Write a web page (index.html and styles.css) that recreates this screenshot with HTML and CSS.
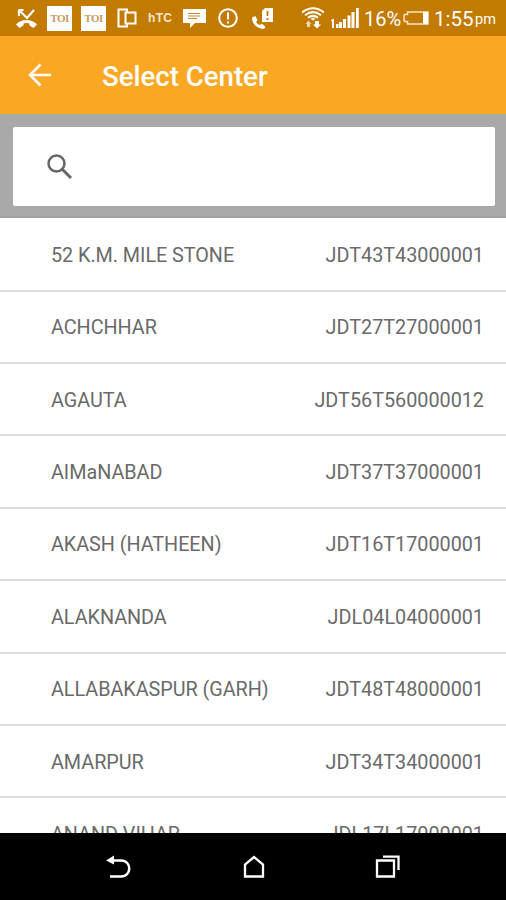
FILE: index.html
```html
<!DOCTYPE html>
<html lang="en">
<head>
<meta charset="utf-8">
<title>Select Center</title>
<link rel="stylesheet" href="styles.css">
</head>
<body>
<div class="screen">
  <header class="status">
    <svg class="missed" width="21" height="22" viewBox="0 0 21 22"><path d="M3 2v6M2.500 2h5M4 3l7 7 7-8" fill="none" stroke="#fff" stroke-width="2.200"/><path d="M0 16.500C5 10.500 16 10.500 21 16.500L17.500 20 13.500 17.500V15.500Q10.500 14.500 7.500 15.500V17.500L3.500 20Z" fill="#fff"/></svg>
    <span class="toi">TOI</span>
    <span class="toi">TOI</span>
    <svg class="devices" width="20" height="20" viewBox="0 0 20 20" fill="none" stroke="#fff" stroke-width="2"><path d="M10 4V1.500H1.500V18.500H10V16"/><path d="M8.500 4.500H18.500V15.500H8.500Z"/></svg>
    <span class="htc">hTC</span>
    <svg class="message" width="23" height="20" viewBox="0 0 23 20"><path d="M0 1H23V15H12L7 20V15H0Z" fill="#fff"/><path d="M5 5.500H17M5 8H17M5 10.500H14" stroke="#c98622"/></svg>
    <svg class="alert" width="20" height="20" viewBox="0 0 20 20"><circle cx="10" cy="10" r="8.800" fill="none" stroke="#fff" stroke-width="2"/><path d="M10 4.500V11.500M10 13.500V15.500" stroke="#fff" stroke-width="2"/></svg>
    <svg class="sim" width="21" height="21" viewBox="0 0 21 21"><path d="M13 0H21V14H10V3Z" fill="#fff"/><path d="M15.500 3V8M15.500 10V12" stroke="#c27a00" stroke-width="1.800"/><path d="M0 9.500L3.500 8 5.500 12.500 4 14Q5.500 16.500 8 17L10 15.500 13.500 19 12 21C5 21 0 16 0 9.500Z" fill="#fff"/></svg>
    <svg class="wifi" width="22" height="22" viewBox="0 0 22 22"><g fill="none" stroke="#fff" stroke-width="2"><path d="M0 5.500Q11-3 22 5.500"/><path d="M3 8.300Q11 2 19 8.300"/><path d="M6 10.800Q11 7 16 10.800"/></g><path d="M8.500 12L11 10.500 13.500 12 11 13.500Z" fill="#fff"/><path d="M6.500 13.500L9.500 17H8V20H5V17H3.500Z" fill="#efd7a9"/><path d="M15 21.500L11 17.500H13V14H17V17.500H19Z" fill="#fff"/></svg>
    <svg class="signal" width="28" height="21" viewBox="0 0 28 21" fill="#fff"><path d="M0 12L3 10.500V20H1V13H0ZM8 14h3v6H8zM12 11h3v9h-3zM16.500 7.500h3V20h-3zM20.500 4h3v16h-3zM25 0h2.800v20H25z"/><path d="M5 16h2.500v4H5z"/></svg>
    <span class="percent">16%</span>
    <svg class="battery" width="26" height="14" viewBox="0 0 26 14"><path d="M4.500 1H25V13H4.500V10.500H1.500L1 9V5L1.500 3.500H4.500Z" fill="none" stroke="#f8e5c5" stroke-width="1.500"/><path d="M20 1H25V13H20Z" fill="#fff"/></svg>
    <span class="time">1:55</span><span class="pm">pm</span>
  </header>
  <div class="bar">
    <svg width="24" height="24" viewBox="0 0 24 24" fill="none" stroke="#fff" stroke-width="2.600"><path d="M23 12H2M12.500 1.500L2 12 12.500 22.500"/></svg>
    <h1>Select Center</h1>
  </div>
  <div class="search">
    <div class="field">
      <svg width="26" height="26" viewBox="0 0 26 26" fill="none" stroke="#666"><circle cx="9.500" cy="9.500" r="8" stroke-width="2.500"/><path d="M15.500 15.500L24 24" stroke-width="3"/></svg>
    </div>
  </div>
  <main class="list">
    <div class="row"><span class="name">52 K.M. MILE STONE</span><span class="code">JDT43T43000001</span></div>
    <div class="row"><span class="name">ACHCHHAR</span><span class="code">JDT27T27000001</span></div>
    <div class="row"><span class="name">AGAUTA</span><span class="code">JDT56T560000012</span></div>
    <div class="row"><span class="name">AIMaNABAD</span><span class="code">JDT37T37000001</span></div>
    <div class="row"><span class="name">AKASH (HATHEEN)</span><span class="code">JDT16T17000001</span></div>
    <div class="row"><span class="name">ALAKNANDA</span><span class="code">JDL04L04000001</span></div>
    <div class="row"><span class="name">ALLABAKASPUR (GARH)</span><span class="code">JDT48T48000001</span></div>
    <div class="row"><span class="name">AMARPUR</span><span class="code">JDT34T34000001</span></div>
    <div class="row"><span class="name">ANAND VIHAR</span><span class="code">JDL17L17000001</span></div>
  </main>
  <nav class="nav">
    <svg width="26" height="24" viewBox="0 0 26 24"><path d="M7 5.500H15C26 5.500 26 21.500 15 21.500H4" fill="none" stroke="#fff" stroke-width="2.500"/><path d="M0 5.500L8 0.500V9.500Z" fill="#fff"/></svg>
    <svg width="22" height="24" viewBox="0 0 22 24"><path d="M2 21.500V9.500L11 2 20 9.500V21.500Z" fill="none" stroke="#fff" stroke-width="2.300"/></svg>
    <svg width="26" height="24" viewBox="0 0 26 24" fill="none" stroke="#fff" stroke-width="2.300"><path d="M2 5.500H19V21.500H2Z"/><path d="M8 1.700H23.500V15"/></svg>
  </nav>
</div>
</body>
</html>
```

FILE: styles.css
```css
* { box-sizing: border-box; }
body { margin: 0; font-family: Roboto, "Liberation Sans", sans-serif; }
svg { display: block; flex: none; }
.screen { width: 506px; height: 900px; overflow: hidden; display: flex; flex-direction: column; background: #fff; }

.status { height: 36px; flex: none; display: flex; align-items: flex-start; background: #c27a00; color: #fff; white-space: nowrap; }
.status span { flex: none; }
.missed { margin: 8px 10px 0 16px; }
.toi { width: 25px; height: 25px; margin: 6px 9px 0 0; background: #fff; color: #cb9a60; font: bold 11px/25px "Liberation Serif", serif; text-align: center; letter-spacing: -0.500px; }
.devices { margin: 8px 11px 0 2px; }
.htc { width: 26px; margin-top: 11px; font: bold 12px/14px "Liberation Sans", sans-serif; letter-spacing: 0.300px; color: #f7e7ca; }
.message { margin: 8px 12px 0 9px; }
.alert { margin: 8px 14px 0 0; }
.sim { margin: 8px 29px 0 0; }
.wifi { margin: 7px 7px 0 0; }
.signal { margin: 8px 5px 0 0; }
.percent { width: 37px; margin-top: 7px; font-size: 20px; line-height: 24px; }
.battery { margin: 11px 5px 0 2px; }
.time { width: 41px; margin-top: 7px; font-size: 20.500px; line-height: 24px; }
.pm { margin-top: 9px; font-size: 14.500px; line-height: 22px; }

.bar { height: 78px; flex: none; display: flex; align-items: center; padding-left: 28px; background: #faa724; color: #fff; }
.bar h1 { margin: 4px 0 0 50px; font-size: 27.600px; line-height: 32px; font-weight: 500; }

.search { height: 104px; flex: none; padding: 13px 11px 11px 13px; background: #a9a9a9; border-bottom: 2px solid #a0a0a0; }
.field { height: 79px; display: flex; align-items: center; padding-left: 34px; background: #fff; border-radius: 2px; }

.list { flex: 1; min-height: 0; overflow: hidden; padding-top: 1.200px; }
.row { height: 72.400px; display: flex; justify-content: space-between; align-items: center; padding: 2px 22px 0 51px; border-bottom: 2px solid #dcdcdc; color: #6a6a6a; font-size: 19.800px; white-space: nowrap; }
.name { letter-spacing: -0.040px; }

.nav { height: 67px; flex: none; display: flex; align-items: center; background: #000; padding: 0 105px 0 106px; justify-content: space-between; }
```
